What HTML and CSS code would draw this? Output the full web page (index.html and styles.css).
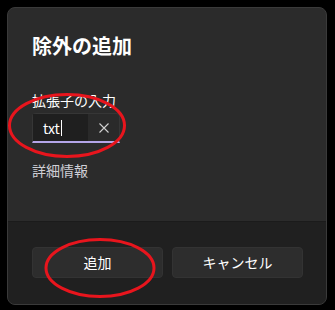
FILE: index.html
```html
<!DOCTYPE html>
<html lang="ja">
<head>
<meta charset="utf-8">
<link rel="stylesheet" href="styles.css">
</head>
<body>
<div class="dialog">
  <div class="content">
    <div class="title">除外の追加</div>
    <div class="label">拡張子の入力</div>
    <div class="input">
      <div class="field"><span class="value">txt</span><span class="caret"></span></div>
      <div class="clear">
        <svg width="10" height="10" viewBox="0 0 10 10"><path d="M0.5 0.5 L9.5 9.5 M9.5 0.5 L0.5 9.5" stroke="#d0d0d0" stroke-width="1.1" fill="none"/></svg>
      </div>
    </div>
    <div class="more">詳細情報</div>
  </div>
  <div class="footer">
    <div class="btn">追加</div>
    <div class="btn">キャンセル</div>
  </div>
</div>
<svg class="marks" width="335" height="310" viewBox="0 0 335 310">
  <ellipse cx="67" cy="125.5" rx="57.5" ry="31" fill="none" stroke="#e8151d" stroke-width="3"/>
  <ellipse cx="100" cy="268" rx="54" ry="28.5" fill="none" stroke="#e8151d" stroke-width="3"/>
</svg>
</body>
</html>
```

FILE: styles.css
```css
html, body {
  margin: 0;
  padding: 0;
  background: #000;
}
body {
  width: 335px;
  height: 310px;
  position: relative;
  overflow: hidden;
  font-family: "Noto Sans CJK JP", "Noto Sans", sans-serif;
  color: #ffffff;
}
.dialog {
  margin: 7px 0 0 7px;
  width: 320px;
  height: 298px;
  box-sizing: border-box;
  border: 1px solid #3a3a3a;
  border-radius: 8px;
  background: #2b2b2b;
  display: flex;
  flex-direction: column;
  overflow: hidden;
}
.content {
  height: 214px;
  box-sizing: border-box;
  padding: 24px 24px 0 24px;
  border-bottom: 1px solid #1b1b1b;
  display: flex;
  flex-direction: column;
  align-items: flex-start;
}
.title {
  font-size: 20px;
  line-height: 28px;
  font-weight: 600;
  color: #ffffff;
}
.label {
  margin-top: 30px;
  font-size: 14px;
  line-height: 20px;
  color: #ffffff;
}
.input {
  margin-top: 3px;
  width: 88px;
  height: 30px;
  box-sizing: border-box;
  border: 1px solid #363636;
  border-bottom: 2px solid #b4a5e8;
  border-radius: 4px 4px 0 0;
  background: #2a2a2a;
  display: flex;
}
.field {
  width: 55px;
  background: #1f1f1f;
  display: flex;
  align-items: center;
  padding-left: 10px;
  box-sizing: border-box;
}
.value {
  font-size: 14px;
  line-height: 20px;
  color: #ffffff;
}
.caret {
  width: 1px;
  height: 16px;
  background: #ffffff;
  margin-left: 1px;
}
.clear {
  flex: 1;
  display: flex;
  align-items: center;
  justify-content: center;
}
.more {
  margin-top: 17px;
  font-size: 14px;
  line-height: 20px;
  color: #cfcfd6;
}
.footer {
  flex: 1;
  background: #202020;
  padding: 25px 23px 0 24px;
  display: flex;
  gap: 9px;
  align-items: flex-start;
}
.btn {
  flex: 1;
  height: 31px;
  box-sizing: border-box;
  border: 1px solid #333333;
  border-radius: 4px;
  background: #2d2d2d;
  font-size: 14px;
  line-height: 29px;
  text-align: center;
  color: #ffffff;
}
.marks {
  position: absolute;
  left: 0;
  top: 0;
  pointer-events: none;
}
```
